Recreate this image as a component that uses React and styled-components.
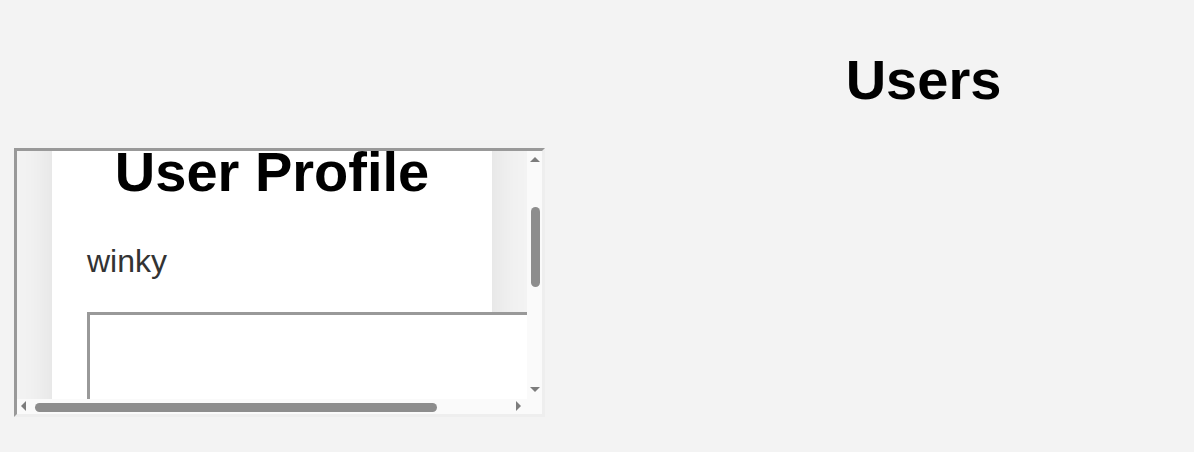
import { useLayoutEffect, useRef } from "react";
import styled, { createGlobalStyle, css } from "styled-components";

const GlobalStyle = createGlobalStyle`
  html, body {
    margin: 0;
    padding: 0;
    background: #f3f3f3;
    font-family: "Liberation Sans", Arial, sans-serif;
  }
`;

const Page = styled.div`
  display: flex;
  flex-direction: row;
  align-items: flex-start;
  min-height: 452px;
`;

const LeftPanel = styled.div`
  width: 653px;
  padding: 148px 0 0 14px;
  box-sizing: border-box;
`;

const RightPanel = styled.div`
  flex: 1;
  padding-top: 48px;
`;

const Title = styled.h1`
  margin: 0;
  font-size: 56px;
  line-height: 64px;
  font-weight: bold;
  color: #000;
  text-align: center;
`;

const Frame = styled.div`
  width: 531px;
  height: 269px;
  box-sizing: border-box;
  border-style: solid;
  border-width: 3px;
  border-color: #999999 #eeeeee #eeeeee #999999;
  display: grid;
  grid-template-columns: 510px 15px;
  grid-template-rows: 248px 15px;
  background: #f3f3f3;
`;

const Viewport = styled.div`
  overflow: hidden;
  background: #f3f3f3;
`;

const Column = styled.div`
  margin-left: 35px;
  width: 440px;
  box-sizing: border-box;
  padding: 118px 35px 30px;
  background: #fff;
  box-shadow: 0 0 36px rgba(0, 0, 0, 0.09);
`;

const UserName = styled.p`
  margin: 40px 0 0;
  font-size: 32px;
  line-height: 34px;
  color: #333;
`;

const InnerFrame = styled.div`
  margin-top: 34px;
  width: 534px;
  height: 350px;
  box-sizing: border-box;
  border-style: solid;
  border-width: 3px;
  border-color: #999999 #eeeeee #eeeeee #999999;
  background: #fff;
`;

const ScrollBar = styled.div`
  display: flex;
  flex-direction: ${(p) => (p.$vertical ? "column" : "row")};
  background: #fafafa;
`;

const Track = styled.div`
  flex: 1;
  display: flex;
  flex-direction: ${(p) => (p.$vertical ? "column" : "row")};
  align-items: center;
`;

const Thumb = styled.div`
  background: #8d8d8d;
  border-radius: 5px;
  ${(p) =>
    p.$vertical
      ? css`
          width: 9px;
          height: 80px;
          margin-top: 41px;
          margin-left: 1px;
        `
      : css`
          height: 9px;
          width: 402px;
          margin-left: 3px;
          margin-top: 1px;
        `}
`;

const ArrowBox = styled.div`
  width: 15px;
  height: 15px;
  flex: none;
  position: relative;
`;

const arrowShapes = {
  up: css`
    top: 6px;
    left: 3px;
    border-left: 5px solid transparent;
    border-right: 5px solid transparent;
    border-bottom: 5px solid #7c7c7c;
  `,
  down: css`
    top: 3px;
    left: 3px;
    border-left: 5px solid transparent;
    border-right: 5px solid transparent;
    border-top: 5px solid #7c7c7c;
  `,
  left: css`
    top: 2px;
    left: 4px;
    border-top: 5px solid transparent;
    border-bottom: 5px solid transparent;
    border-right: 5px solid #7c7c7c;
  `,
  right: css`
    top: 2px;
    left: 4px;
    border-top: 5px solid transparent;
    border-bottom: 5px solid transparent;
    border-left: 5px solid #7c7c7c;
  `,
};

const Arrow = styled.span`
  position: absolute;
  width: 0;
  height: 0;
  ${(p) => arrowShapes[p.$dir]}
`;

const Corner = styled.div`
  background: #fafafa;
`;

function App() {
  const viewRef = useRef(null);

  useLayoutEffect(() => {
    if (viewRef.current) viewRef.current.scrollTop = 129;
  }, []);

  return (
    <Page>
      <GlobalStyle />
      <LeftPanel>
        <Frame>
          <Viewport ref={viewRef}>
            <Column>
              <Title>User Profile</Title>
              <UserName>winky</UserName>
              <InnerFrame />
            </Column>
          </Viewport>
          <ScrollBar $vertical>
            <ArrowBox>
              <Arrow $dir="up" />
            </ArrowBox>
            <Track $vertical>
              <Thumb $vertical />
            </Track>
            <ArrowBox>
              <Arrow $dir="down" />
            </ArrowBox>
          </ScrollBar>
          <ScrollBar>
            <ArrowBox>
              <Arrow $dir="left" />
            </ArrowBox>
            <Track>
              <Thumb />
            </Track>
            <ArrowBox>
              <Arrow $dir="right" />
            </ArrowBox>
          </ScrollBar>
          <Corner />
        </Frame>
      </LeftPanel>
      <RightPanel>
        <Title>Users</Title>
      </RightPanel>
    </Page>
  );
}

export default App;
